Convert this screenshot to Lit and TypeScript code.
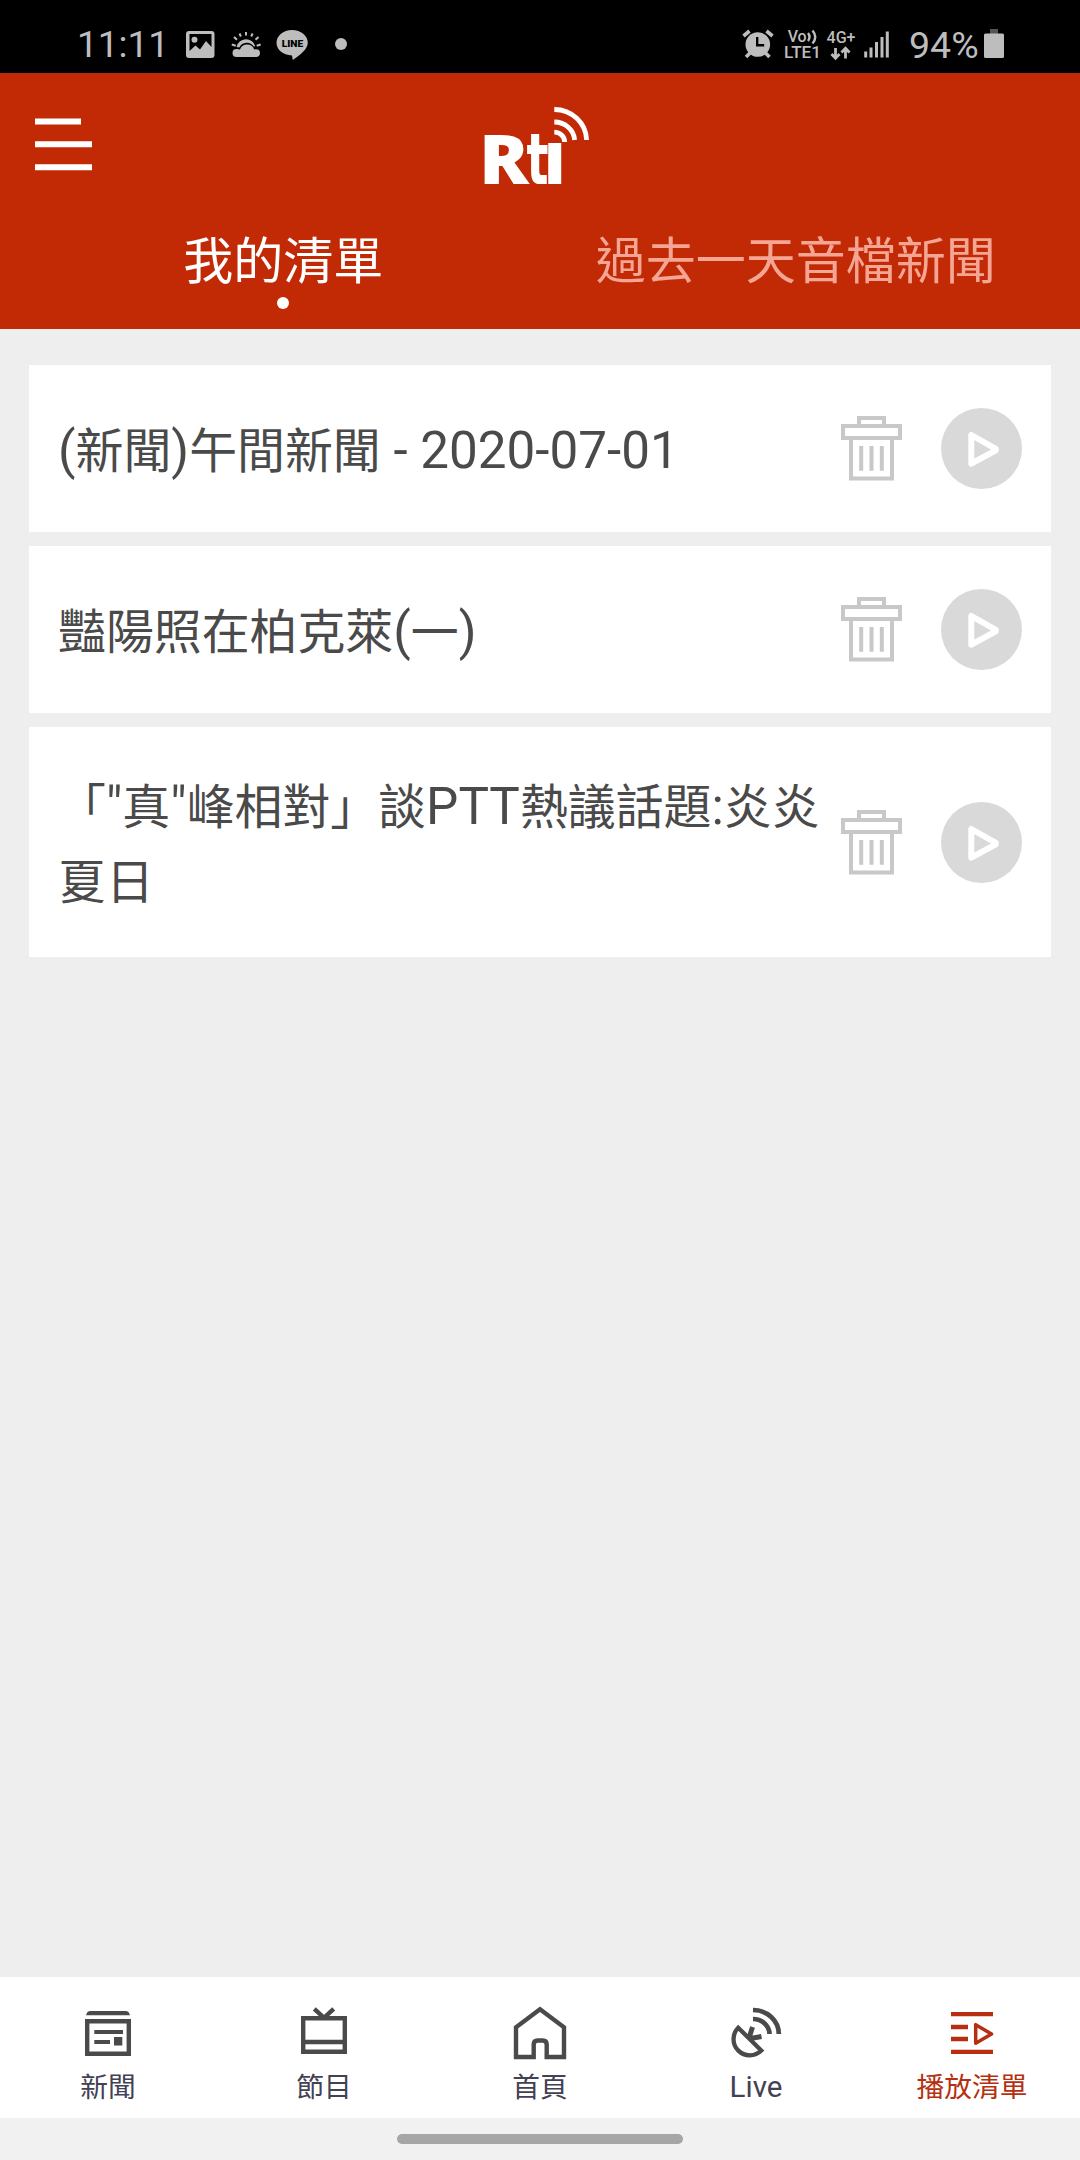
import { LitElement, html, svg, css } from "lit";
import { customElement, property } from "lit/decorators.js";
import { classMap } from "lit/directives/class-map.js";

/* Latin runs are set slightly larger than the CJK text around them. */
const mixed = (text: string) =>
  text
    .split(/([\x20-\x7e]+)/)
    .filter((part) => part.length > 0)
    .map((part) => (/^[\x20-\x7e]+$/.test(part) ? html`<span class="latin">${part}</span>` : part));

@customElement("status-bar")
class StatusBar extends LitElement {
  static styles = css`
    :host {
      display: flex;
      align-items: flex-start;
      justify-content: space-between;
      height: 73px;
      box-sizing: border-box;
      background: #000;
      color: #bdbdbd;
      font-family: Roboto, sans-serif;
    }
    svg {
      display: block;
      fill: #bdbdbd;
    }
    .left,
    .right {
      display: flex;
      align-items: flex-start;
      padding-top: 24px;
    }
    .left {
      padding-left: 77px;
    }
    .right {
      padding-right: 75px;
    }
    .time,
    .level {
      font-size: 37px;
      line-height: 42px;
      white-space: nowrap;
    }
    .time {
      width: 104px;
    }
    .level {
      width: 72px;
      padding-left: 2px;
      font-size: 37.500px;
    }
    .tiny {
      font-weight: 500;
    }
  `;

  render() {
    return html`
      <div class="left">
        <span class="time">11:11</span>
        <svg width="170" height="42" viewBox="181 24 170 42">
          <path
            fill-rule="evenodd"
            d="M189 31h22.500a3 3 0 0 1 3 3v21a3 3 0 0 1-3 3H189a3 3 0 0 1-3-3V34a3 3 0 0 1 3-3zM189.500 34v17l6-5.500 4.500 4 6-8.500 5.500 6V34zM194.500 36.800a3 3 0 1 1 0 6 3 3 0 0 1 0-6z"
          />
          <path
            d="M236.500 57a4 4 0 0 1 0-8c1.500 0 2.500.3 3.500.6a7.500 7.500 0 0 1 14.200 0c4.200-.9 5.800 1 5.800 3.600 0 2.300-1.500 3.800-4 3.800z"
          />
          <path d="M236.500 47a9.700 9.700 0 0 1 18.800-.8l-1.400.4a8.400 8.400 0 0 0-14.600.8z" />
          <path
            d="M231.800 44.500l4 1.200M234 37l3 2.800M239.500 33.500l1.400 3M246 32v3.600M252.600 33.500l-1.400 3M258.500 37l-3 2.800M260.700 44.500l-4 1.200"
            fill="none"
            stroke="#bdbdbd"
            stroke-width="2"
          />
          <path
            d="M292 30c9 0 15.800 5.700 15.800 12.800 0 6.200-7.500 12.300-15 17.200l-.8-4.600c-9.300-.3-15.500-5.800-15.500-12.600C276.500 35.700 283.300 30 292 30z"
          />
          <text x="281.700" y="47" font-size="9.500" font-weight="900" fill="#000" textLength="21.500" lengthAdjust="spacingAndGlyphs">LINE</text>
          <circle cx="341" cy="44" r="6" />
        </svg>
      </div>
      <div class="right">
        <svg width="167" height="42" viewBox="740 24 167 42">
          <circle cx="757.800" cy="44.500" r="12.300" />
          <path
            d="M743.500 36l6-5M766.500 31l6 5M750 53l-4 4M765.500 53l4 4"
            fill="none"
            stroke="#bdbdbd"
            stroke-width="3.600"
          />
          <path d="M757.200 37v8.200h7" fill="none" stroke="#000" stroke-width="2.400" />
          <g class="tiny">
            <text x="787.700" y="41.800" font-size="16.500" textLength="19" lengthAdjust="spacingAndGlyphs">Vo</text>
            <text x="784" y="58" font-size="17" textLength="37" lengthAdjust="spacingAndGlyphs">LTE1</text>
            <text x="826.500" y="42.700" font-size="16.500" textLength="29" lengthAdjust="spacingAndGlyphs">4G+</text>
          </g>
          <path
            d="M808 33q3 4 0 8M812.500 30.500q5.500 6.500 0 13"
            fill="none"
            stroke="#bdbdbd"
            stroke-width="2.400"
          />
          <path
            d="M835.500 48v10M831.500 54l4 4.300 4-4.300M845.500 58.500v-10M841.500 52.500l4-4.300 4 4.300"
            fill="none"
            stroke="#bdbdbd"
            stroke-width="2.800"
          />
          <path
            d="M864.200 51.500h3v6h-3zM869.500 47.500h3v10h-3zM875 42h3v15.500h-3zM880.500 37h3v20.500h-3zM885.800 31.500h3v26h-3z"
          />
        </svg>
        <span class="level">94%</span>
        <svg width="24" height="42" viewBox="981 24 24 42">
          <path d="M990 29h8v5h-8z" fill="#555" />
          <rect x="984" y="33.500" width="20" height="24.500" rx="1.500" />
        </svg>
      </div>
    `;
  }
}

@customElement("app-header")
class AppHeader extends LitElement {
  static styles = css`
    :host {
      display: flex;
      flex-direction: column;
      height: 256px;
      background: #c22a06;
      color: #fff;
      font-family: "Noto Sans CJK TC", sans-serif;
    }
    svg {
      display: block;
    }
    .top {
      display: grid;
      grid-template-columns: 470px 130px 1fr;
      align-items: start;
      height: 148px;
      box-sizing: border-box;
      padding-top: 27px;
    }
    .menu {
      margin: 18px 0 0 35px;
    }
    .word {
      font-family: "Open Sans", sans-serif;
      font-weight: 800;
    }
    .stem {
      font-family: "DejaVu Sans", sans-serif;
      font-weight: 700;
    }
    .tabs {
      display: grid;
      grid-template-columns: 1fr 1fr;
      padding: 0 28px 0 27px;
    }
    .tab {
      display: flex;
      flex-direction: column;
      align-items: center;
      gap: 4px;
      font-size: 50px;
      line-height: 72px;
      white-space: nowrap;
      color: #f5a594;
    }
    .tab.active {
      color: #fff;
    }
    .dot {
      width: 12px;
      height: 12px;
      border-radius: 50%;
      background: #fff;
    }
  `;

  render() {
    const tabs = [
      { label: "我的清單", active: true },
      { label: "過去一天音檔新聞", active: false },
    ];
    return html`
      <div class="top">
        <svg class="menu" width="58" height="53" viewBox="0 0 58 53" fill="#fff">
          <path d="M0 .5h46v6H0zM0 23.300h57v6H0zM0 46.300h57v6H0z" />
        </svg>
        <svg width="130" height="110" viewBox="470 100 130 110">
          <g class="word" fill="#fff">
            <text transform="translate(479 184) scale(1.06 1)" font-size="69.500">R</text>
            <text class="stem" transform="translate(526.500 184) scale(.64 1)" font-size="72">t</text>
            <text transform="translate(543.800 184) scale(.9 1)" font-size="75">ı</text>
          </g>
          <path
            d="M554.300 109.500A32.300 31.500 0 0 1 586.600 140M554.300 122A20.300 19 0 0 1 574.600 140M554.300 132.200A10.400 10 0 0 1 564.700 142"
            fill="none"
            stroke="#fff"
            stroke-width="4.800"
          />
        </svg>
      </div>
      <nav class="tabs">
        ${tabs.map(
          (t) => html`<div class=${classMap({ tab: true, active: t.active })}>
            <span>${t.label}</span>
            ${t.active ? html`<i class="dot"></i>` : ""}
          </div>`
        )}
      </nav>
    `;
  }
}

@customElement("playlist-item")
class PlaylistItem extends LitElement {
  @property() label = "";

  static styles = css`
    :host {
      display: flex;
      align-items: center;
      min-height: 167px;
      box-sizing: border-box;
      padding: 40px 29px;
      background: #fff;
    }
    .label {
      flex: 1;
      margin: -1px 0 1px;
      color: #4a4a4a;
      font-family: "Noto Sans CJK TC", sans-serif;
      font-size: 47.900px;
      line-height: 75px;
    }
    .latin {
      font-family: Roboto, sans-serif;
      font-size: 51.200px;
      line-height: 1;
    }
    svg {
      display: block;
      flex: none;
    }
    .trash {
      margin-right: 39px;
    }
  `;

  render() {
    return html`
      <div class="label">${mixed(this.label)}</div>
      <svg class="trash" width="61" height="65" viewBox="0 0 61 65" fill="none" stroke="#c8c8c8" stroke-width="4">
        <path d="M18 8V2h25v6M2 10h57v12H2zM10 24v38.500h41V24" />
        <path d="M20.200 30v24.700M30.500 30v24.700M40.800 30v24.700" />
      </svg>
      <svg width="81" height="81" viewBox="0 0 81 81">
        <circle cx="40.500" cy="40.500" r="40.500" fill="#d9d9d9" />
        <path
          d="M30.300 27v28.700l24.500-13.400v-1.400z"
          fill="none"
          stroke="#fff"
          stroke-width="6"
          stroke-linejoin="round"
        />
      </svg>
    `;
  }
}

const navIcons = {
  news: svg`
    <path d="M8 12.300q1-4.300 4.500-4.300h35q3.500 0 4.500 4.300zM16.300 27H45v4H16.300zM16.300 37H32v4H16.300zM36 34h8.300v8.500H36z" fill="currentColor"/>
    <path d="M9.200 18.200h41.600v32.600H9.200z" stroke-width="4.400"/>`,
  tv: svg`<path d="M9.200 15.200h41.600v33.600H9.200zM9 39h42M20.300 5.800l9.700 9 9.700-9" stroke-width="4.400"/>`,
  home: svg`<path d="M6 54V24.300L30 6.200l24 18.100V54H36.700V41.500q0-4-4-4h-5q-4 0-4 4V54z" stroke-width="4.400"/>`,
  live: svg`
    <path d="M12.200 24.700L35.300 47.500A16.200 16.200 0 0 1 12.200 24.700z" stroke-width="4.300"/>
    <path d="M26.500 24l-3.300 10.500M35.500 33.500l-11 2" stroke-width="5"/>
    <path d="M27 7A25.800 24 0 0 1 52.800 31M27 16A16.500 15 0 0 1 43.500 31" stroke-width="4.700"/>`,
  playlist: svg`
    <path d="M9 11.200h42M9 48.800h42M9 24h17M9 36h17" stroke-width="4.300"/>
    <path d="M33.700 21.700v18.500L49.500 31z" stroke-width="3.500" stroke-linejoin="round"/>`,
};

@customElement("bottom-nav")
class BottomNav extends LitElement {
  static styles = css`
    :host {
      display: grid;
      grid-template-columns: repeat(5, 1fr);
      height: 141px;
      background: #fff;
    }
    .item {
      display: flex;
      flex-direction: column;
      align-items: center;
      padding-top: 26px;
      color: #4a4a4a;
    }
    .item.active {
      color: #b52f10;
    }
    .label {
      font-family: "Noto Sans CJK TC", sans-serif;
      font-size: 27.700px;
      line-height: 40px;
      margin-top: 2px;
      white-space: nowrap;
      color: #434154;
    }
    .active .label {
      color: #b52f10;
    }
    .latin {
      font-family: Roboto, sans-serif;
      font-size: 29.500px;
      line-height: 1;
    }
    svg {
      display: block;
    }
  `;

  render() {
    const items = [
      { icon: navIcons.news, label: "新聞" },
      { icon: navIcons.tv, label: "節目" },
      { icon: navIcons.home, label: "首頁" },
      { icon: navIcons.live, label: "Live" },
      { icon: navIcons.playlist, label: "播放清單", active: true },
    ];
    return items.map(
      (i) => html`<div class=${classMap({ item: true, active: !!i.active })}>
        <svg width="60" height="60" viewBox="0 0 60 60" fill="none" stroke="currentColor" stroke-width="0">${i.icon}</svg>
        <span class="label">${mixed(i.label)}</span>
      </div>`
    );
  }
}

@customElement("app-root")
class AppRoot extends LitElement {
  static styles = css`
    :host {
      display: flex;
      flex-direction: column;
      width: 1080px;
      height: 2160px;
      background: #eee;
      overflow: hidden;
    }
    .list {
      flex: 1;
      display: flex;
      flex-direction: column;
      gap: 14px;
      padding: 36px 29px;
    }
    .gesture {
      display: flex;
      justify-content: center;
      align-items: center;
      height: 42px;
      background: #f1f1f1;
    }
    .pill {
      width: 286px;
      height: 10px;
      border-radius: 5px;
      background: #a6a6a6;
    }
  `;

  render() {
    const items = ["(新聞)午間新聞 - 2020-07-01", "豔陽照在柏克萊(一)", "「\"真\"峰相對」談PTT熱議話題:炎炎夏日"];
    return html`
      <status-bar></status-bar>
      <app-header></app-header>
      <main class="list">${items.map((t) => html`<playlist-item .label=${t}></playlist-item>`)}</main>
      <bottom-nav></bottom-nav>
      <div class="gesture"><div class="pill"></div></div>
    `;
  }
}
